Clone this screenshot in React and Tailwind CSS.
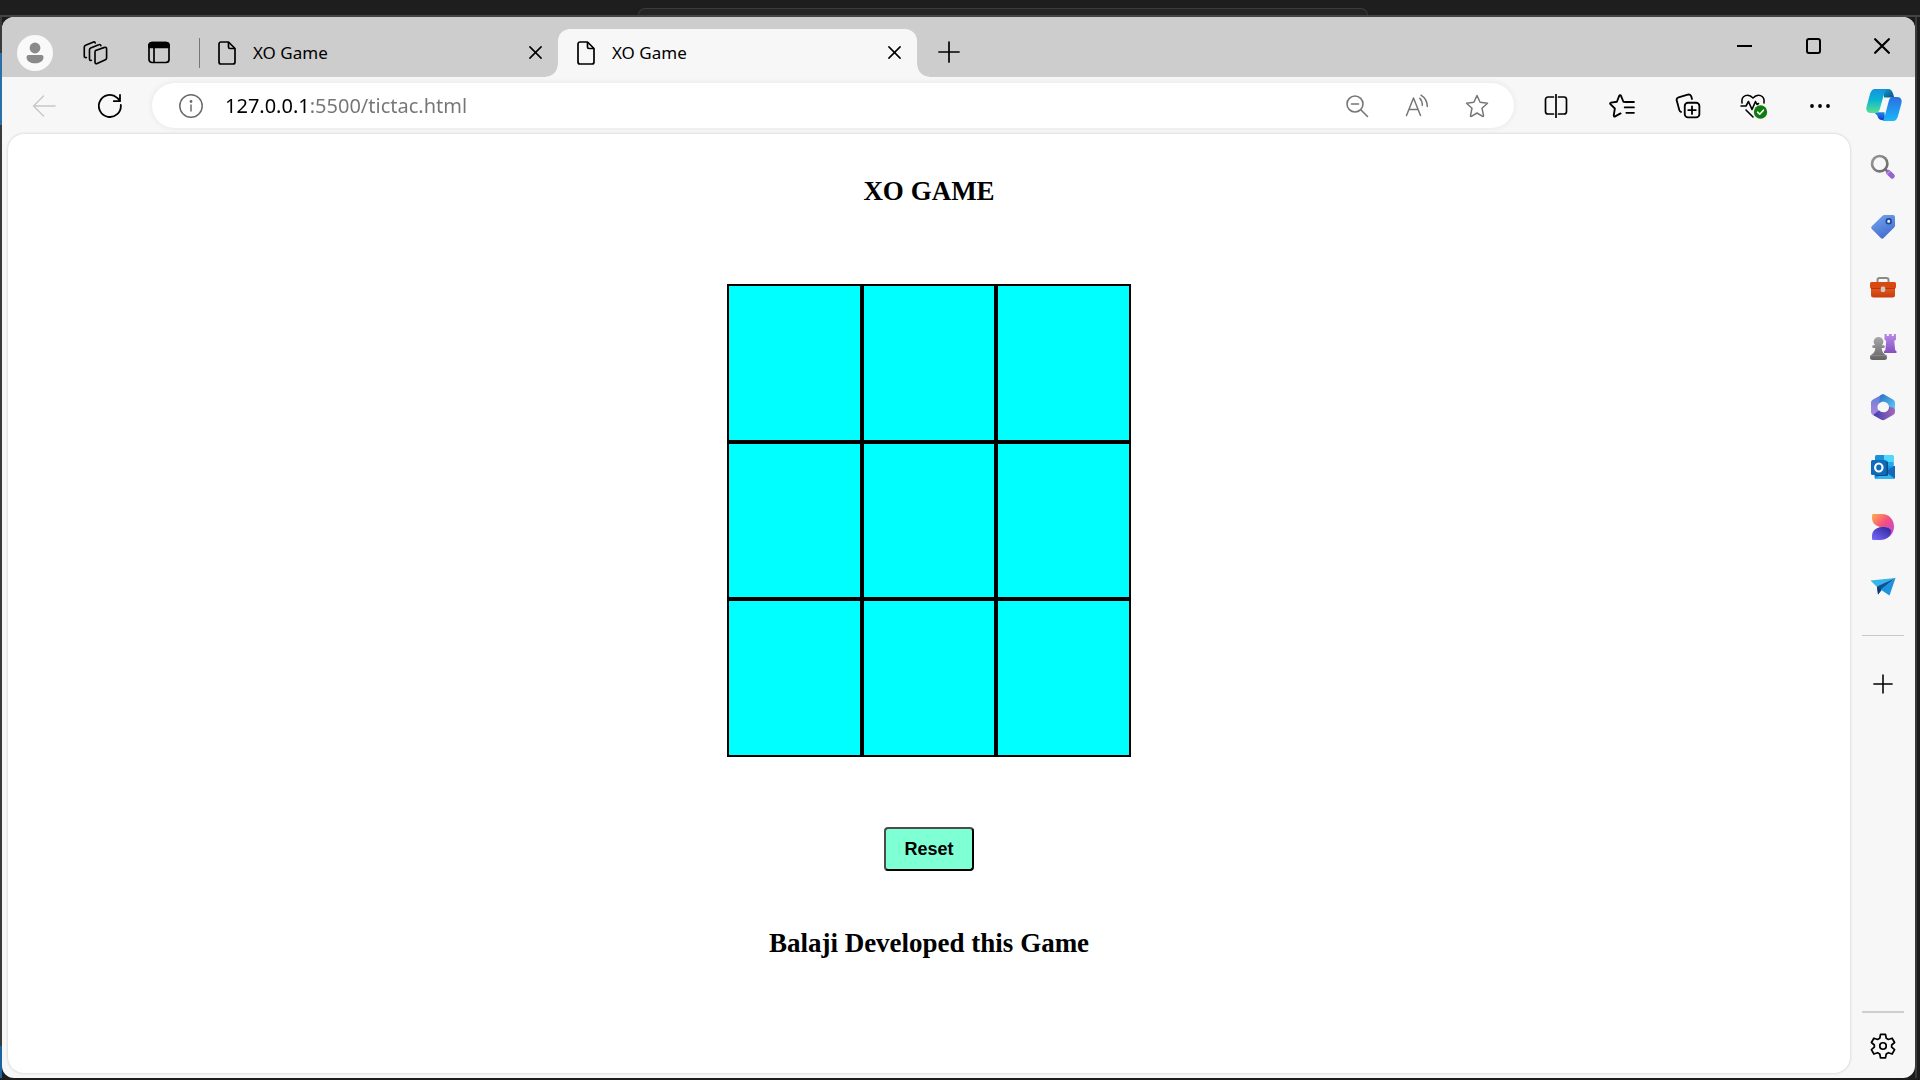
import { useState } from "react";

function Icon({ size = 24, width = 1.7, className = "", children }) {
  return (
    <svg
      width={size}
      height={size}
      viewBox="0 0 24 24"
      fill="none"
      stroke="currentColor"
      strokeWidth={width}
      strokeLinecap="round"
      strokeLinejoin="round"
      className={"shrink-0 " + className}
      aria-hidden="true"
    >
      {children}
    </svg>
  );
}

const ProfileIcon = () => (
  <svg width="36" height="36" viewBox="0 0 36 36" aria-hidden="true">
    <circle cx="18" cy="18" r="18" fill="#f9f9f9" />
    <circle cx="18" cy="13" r="5.4" fill="#8a8a8a" />
    <path d="M11.5 20h13a2 2 0 0 1 2 2c0 4-3.6 6.3-8.500 6.300S9.500 26 9.500 22a2 2 0 0 1 2-2z" fill="#8a8a8a" />
  </svg>
);

const WorkspacesIcon = () => (
  <Icon size={26} width={1.500}>
    <path d="M12.600 9.700l8.200-2.900c1-.4 1.900.2 1.900 1.200v8.600c0 .7-.4 1.300-1.100 1.600l-7.600 3.500c-1 .5-2-.1-2-1.200v-9.300c0-.7.1-1.200.6-1.500z" />
    <path d="M8.600 18.800c-1 .4-1.700-.2-1.700-1.200V8.900c0-.8.4-1.300 1.100-1.600l7.500-3c.9-.4 1.700 0 1.900.9" />
    <path d="M4 16.200c-1 .3-1.900-.2-1.900-1.300V6.600c0-.8.5-1.400 1.200-1.700l6.800-2.900c.9-.4 1.700-.1 2.100.7" />
  </Icon>
);

const TabActionsIcon = () => (
  <Icon>
    <rect x="2" y="1.500" width="20" height="20" rx="3" />
    <path d="M2 6.500V4.500a3 3 0 0 1 3-3h14a3 3 0 0 1 3 3v2z" fill="currentColor" />
    <path d="M7 7v14" />
  </Icon>
);

const PageIcon = () => (
  <svg width="18" height="24" viewBox="0 0 18 24" fill="none" stroke="currentColor" strokeWidth="1.700" strokeLinejoin="round" className="shrink-0" aria-hidden="true">
    <path d="M3 1h7.500L17 7.500V21a2 2 0 0 1-2 2H3a2 2 0 0 1-2-2V3a2 2 0 0 1 2-2z" />
    <path d="M10.500 1v5a1.500 1.500 0 0 0 1.500 1.500h5" />
  </svg>
);

const CloseIcon = ({ size = 13, width = 1.7 }) => (
  <svg width={size} height={size} viewBox="0 0 14 14" fill="none" stroke="currentColor" strokeWidth={width} strokeLinecap="round" aria-hidden="true">
    <path d="M1 1l12 12M13 1L1 13" />
  </svg>
);

const StarIcon = () => (
  <Icon width={1.500}>
    <path d="M12 1.500l3.100 6.800 7.400.9-5.500 5 1.500 7.500c.1.600-.4.900-.9.700L12 19l-5.600 3.400c-.5.200-1-.1-.9-.7L7 14.200l-5.500-5 7.400-.9z" />
  </Icon>
);

const ReadAloudIcon = () => (
  <Icon width={1.500}>
    <path d="M1.500 21.500L8.500 4l7 17.500M4 15.500h9" />
    <path d="M14.800 4.200c1.700 1.800 2.600 4.300 2.500 7" />
    <path d="M16 1.200c4 2.500 6.200 6.600 6.300 11.300" />
  </Icon>
);

const CopilotIcon = () => (
  <svg width="38" height="34" viewBox="0 0 38 34" aria-hidden="true">
    <defs>
      <linearGradient id="cpA" x1="0" y1="0" x2="0" y2="1">
        <stop offset="0" stopColor="#1691e0" />
        <stop offset=".45" stopColor="#08b4d4" />
        <stop offset="1" stopColor="#5be08a" />
      </linearGradient>
      <linearGradient id="cpB" x1="0" y1="0" x2="0" y2="1">
        <stop offset="0" stopColor="#2b6fe0" />
        <stop offset="1" stopColor="#18b8fb" />
      </linearGradient>
      <linearGradient id="cpC" x1="0" y1="0" x2="1" y2="1">
        <stop offset="0" stopColor="#0ba3d8" />
        <stop offset="1" stopColor="#0d4f86" />
      </linearGradient>
      <linearGradient id="cpD" x1="0" y1="0" x2="0" y2="1">
        <stop offset="0" stopColor="#1c8be8" />
        <stop offset="1" stopColor="#1536c8" />
      </linearGradient>
    </defs>
    <path d="M17 1h6c3 0 4.300 2 5.200 5l1 3.500h-10z" fill="url(#cpC)" />
    <path d="M9 24.300h10.500L20 32h-3c-3 0-4-2-4.700-4.500z" fill="url(#cpD)" />
    <path d="M10 1h13c-2.500.5-3.300 2.500-4 5L15 20.500c-.8 3-2.300 4.500-5 4.500H5.500C2 25 .6 22 1.600 18.500L5 6c.9-3 2.300-5 5-5z" fill="url(#cpA)" />
    <path d="M27.500 9h5c3.500 0 4.900 3.200 3.900 6.500L33 28c-.9 3-2.300 5-5 5H16.500c2-.5 2.500-2 3.200-4.500L23.500 14c.8-3 1.500-5 4-5z" fill="url(#cpB)" />
  </svg>
);

const SearchColorIcon = () => (
  <svg width="26" height="26" viewBox="0 0 26 26" fill="none" aria-hidden="true">
    <defs>
      <linearGradient id="seA" x1="0" y1="0" x2="1" y2="1">
        <stop offset="0" stopColor="#9a9a9a" />
        <stop offset="1" stopColor="#666" />
      </linearGradient>
    </defs>
    <path d="M14.500 14.500l3.500 3.500" stroke="#777" strokeWidth="2.500" />
    <circle cx="9.700" cy="9.700" r="7.700" stroke="url(#seA)" strokeWidth="2.600" />
    <path d="M18.500 18.500l3.800 3.600" stroke="#9464cf" strokeWidth="5" strokeLinecap="round" />
    <path d="M17 20l3-3" stroke="#b58be6" strokeWidth="1.500" />
  </svg>
);

const TagIcon = () => (
  <svg width="26" height="26" viewBox="0 0 26 26" aria-hidden="true">
    <defs>
      <linearGradient id="taA" x1="0" y1="0" x2=".5" y2="1">
        <stop offset="0" stopColor="#75a7f2" />
        <stop offset="1" stopColor="#4470cf" />
      </linearGradient>
    </defs>
    <path d="M14.500 1H23a2 2 0 0 1 2 2v8.500c0 .8-.3 1.500-.8 2L13.600 24a2 2 0 0 1-2.800 0L1.800 15a2 2 0 0 1 0-2.800L12.500 1.800c.5-.5 1.200-.8 2-.8z" fill="url(#taA)" />
    <circle cx="18.700" cy="7.300" r="2.400" fill="#f3f6ff" stroke="#24479b" strokeWidth="1.800" />
  </svg>
);

const ToolboxIcon = () => (
  <svg width="28" height="22" viewBox="0 0 28 22" aria-hidden="true">
    <defs>
      <linearGradient id="tbA" x1="0" y1="0" x2="0" y2="1">
        <stop offset="0" stopColor="#e8601b" />
        <stop offset="1" stopColor="#c83b10" />
      </linearGradient>
    </defs>
    <path d="M8.500 6.500V4a2 2 0 0 1 2-2h7a2 2 0 0 1 2 2v2.500" fill="none" stroke="#8a8a8a" strokeWidth="2" />
    <path d="M2 10h24v9a2.500 2.500 0 0 1-2.500 2.500h-19A2.500 2.500 0 0 1 2 19z" fill="url(#tbA)" />
    <path d="M2.500 6h23A1.500 1.500 0 0 1 27 7.500V11a1.500 1.500 0 0 1-1.500 1.500h-23A1.500 1.500 0 0 1 1 11V7.500A1.500 1.500 0 0 1 2.500 6z" fill="#d94a12" />
    <path d="M2 12.500h24" stroke="#b8380c" strokeWidth="1" />
    <rect x="11.800" y="10.500" width="4.400" height="5.500" rx="1.500" fill="#c9c9c9" />
  </svg>
);

const ChessIcon = () => (
  <svg width="28" height="28" viewBox="0 0 28 28" aria-hidden="true">
    <defs>
      <linearGradient id="chA" x1="0" y1="0" x2="0" y2="1">
        <stop offset="0" stopColor="#a8a8a8" />
        <stop offset="1" stopColor="#646464" />
      </linearGradient>
      <linearGradient id="chB" x1="0" y1="0" x2="0" y2="1">
        <stop offset="0" stopColor="#b78be8" />
        <stop offset="1" stopColor="#8450be" />
      </linearGradient>
    </defs>
    <path d="M15.500 1h2.300v2h2V1h3v2h2V1H27v5.500l-1.700 1.500.8 9 1.400 1.300V20H15v-1.700l1.400-1.300.8-9L15.500 6.500z" fill="url(#chB)" />
    <path d="M9.500 4a4.800 4.800 0 0 1 3.300 8.300h1.700c.8 0 1.300.6 1.300 1.300 0 .8-.5 1.400-1.300 1.400h-1.800c.2 3.500 1.500 5.300 3.600 6.600 1.300.9 1.700 2 1.700 3.200 0 1.500-1 2.200-2.500 2.200h-12C2 27 1 26.300 1 24.800c0-1.200.4-2.300 1.700-3.200 2.100-1.300 3.400-3.100 3.600-6.600H4.500c-.8 0-1.300-.6-1.300-1.400 0-.7.5-1.300 1.300-1.300h1.700A4.800 4.800 0 0 1 9.500 4z" fill="url(#chA)" />
    <path d="M1.500 22.500h16" stroke="#888" strokeWidth="1" />
  </svg>
);

const Microsoft365Icon = () => (
  <svg width="26" height="28" viewBox="0 0 26 28" aria-hidden="true">
    <defs>
      <linearGradient id="msA" x1="0" y1="0" x2="0" y2="1">
        <stop offset="0" stopColor="#5f7fd8" />
        <stop offset="1" stopColor="#b187dc" />
      </linearGradient>
      <linearGradient id="msB" x1="0" y1="0" x2="1" y2="1">
        <stop offset="0" stopColor="#2b6fc9" />
        <stop offset="1" stopColor="#5fd0f5" />
      </linearGradient>
      <linearGradient id="msC" x1="0" y1="0" x2="1" y2="0">
        <stop offset="0" stopColor="#3a3fb5" />
        <stop offset="1" stopColor="#a667b8" />
      </linearGradient>
    </defs>
    <path d="M13 1L3 6.500C1.700 7.300 1 8.300 1 9.800v9c0 1.700.9 2.700 2 3.200l6-4c-1-1-1.500-2.300-1.500-4 0-2.500 2-4.500 3.500-5z" fill="url(#msA)" />
    <path d="M10 2.700l1.600-1c1-.6 2-.6 3 0L23 6.500c1.300.8 2 1.800 2 3.300v7.500l-6-3.300c0-3-2.700-5.300-5.700-5.300-1.500 0-3.300.6-4.300 2z" fill="url(#msB)" />
    <path d="M3 22l8.300 4.700c1.200.6 2.300.6 3.400 0L23 22c1.300-.8 2-1.800 2-3.300V17c-.8-2.500-3-3.500-6-3-.2 3.500-2.700 5.300-5.500 5.300-2 0-3.500-.7-4.500-2z" fill="url(#msC)" />
    <circle cx="13.300" cy="14" r="4.700" fill="#f7f7f7" />
  </svg>
);

const OutlookIcon = () => (
  <svg width="26" height="26" viewBox="0 0 26 26" aria-hidden="true">
    <rect x="5" y="1" width="18.500" height="16" rx="1.500" fill="#1a8fdb" />
    <path d="M14 1h8a1.500 1.500 0 0 1 1.500 1.500V8H14z" fill="#4fd9ff" />
    <path d="M14 8h9.500v7H14z" fill="#28a8ea" />
    <path d="M4.500 13L25 12v11a2 2 0 0 1-2 2H6.500a2 2 0 0 1-2-2z" fill="#1490df" />
    <path d="M25 12L13 18.500 24 24.800c.6-.4 1-1 1-1.800z" fill="#1769b8" />
    <path d="M5 24.500l11-6.300 8.500 6.300c-.4.300-.9.500-1.500.500H6.500c-.6 0-1.100-.2-1.500-.5z" fill="#36b4f0" />
    <rect x="5" y="7" width="13" height="15" rx="1.500" fill="#0a4d84" />
    <rect x="1" y="6" width="15.500" height="15" rx="1.500" fill="#0f6cbd" />
    <ellipse cx="8.800" cy="13.500" rx="3.700" ry="4" fill="none" stroke="#fff" strokeWidth="2.200" />
  </svg>
);

const DesignerIcon = () => (
  <svg width="24" height="28" viewBox="0 0 24 28" aria-hidden="true">
    <defs>
      <linearGradient id="deA" x1="0" y1="0" x2="1" y2="1">
        <stop offset="0" stopColor="#ffb04a" />
        <stop offset=".45" stopColor="#f4517d" />
        <stop offset="1" stopColor="#b044f2" />
      </linearGradient>
      <linearGradient id="deB" x1="0" y1="1" x2="1" y2="0">
        <stop offset="0" stopColor="#7a6bff" />
        <stop offset="1" stopColor="#2a2196" />
      </linearGradient>
    </defs>
    <path d="M2.500 1H11c7 0 12 5.500 12 12.500 0 5.500-3 9.500-7 11.500l3-9c-3-2.500-6-2-9-2C5 13.500 1 10 1 5V2.500C1 1.500 1.500 1 2.500 1z" fill="url(#deA)" />
    <path d="M10.500 14c4.500-.5 9.500.5 9.500 4.500 0 5-5.500 8.500-10.500 8.500h-7C1.500 27 1 26.500 1 25.500V23c0-5 4-8.500 9.500-9z" fill="url(#deB)" />
  </svg>
);

const DropIcon = () => (
  <svg width="26" height="20" viewBox="0 0 26 20" aria-hidden="true">
    <path d="M.5 3.500L25.500 1 7.500 10.500z" fill="#36b7ec" />
    <path d="M7 9.500L25.500 1 12.500 12 8 17.500z" fill="#124f93" />
    <path d="M12 12l-4 5.500L7 10z" fill="#0b3c74" />
    <path d="M25.500 1L19.500 18.500 10.500 12.500z" fill="#1e94df" />
  </svg>
);

const tools = [
  {
    label: "Split screen",
    icon: (
      <Icon>
        <path d="M9.500 3H4a2.500 2.500 0 0 0-2.500 2.500v12A2.500 2.500 0 0 0 4 20h5.500M14.500 3H20a2.500 2.500 0 0 1 2.500 2.500v12A2.500 2.500 0 0 1 20 20h-5.500M12 .5v23" />
      </Icon>
    ),
  },
  {
    label: "Favorites",
    icon: (
      <Icon size={26}>
        <path d="M16 8.500l-2.700-.4L11 2.500c-.3-.7-1.200-.7-1.500 0L7.300 8.100l-5.500.8c-.8.100-1 .9-.5 1.400l4.100 4-1 6.400c-.1.800.6 1.300 1.300.9l5-2.800" />
        <path d="M16 8.300h7M14.500 13.300H23M16 18.300h7" />
      </Icon>
    ),
  },
  {
    label: "Collections",
    icon: (
      <Icon size={26}>
        <rect x="9" y="9" width="13.500" height="13.500" rx="3" />
        <path d="M15.700 12.300v7M12.200 15.800h7" />
        <path d="M5.500 17.500c-.8-.3-1.300-.9-1.500-1.700L1.600 7c-.4-1.500.3-2.600 1.700-3l8.500-2.500c1.500-.4 2.700.2 3.200 1.600l.7 2.400" />
      </Icon>
    ),
  },
  {
    label: "Browser essentials",
    icon: (
      <svg width="28" height="28" viewBox="0 0 28 28" fill="none" stroke="currentColor" strokeWidth="1.600" strokeLinecap="round" strokeLinejoin="round" aria-hidden="true">
        <path d="M2 11C.8 3 8.500 1 13 6c4.500-5 12.200-3 11 5M6 18l7 7" />
        <path d="M1 14h5l2.500-4.500 3.500 8L15.500 9.500l1.500 3 1.500-1" />
        <circle cx="20.500" cy="20" r="6.700" fill="#107c10" stroke="none" />
        <path d="M17.600 20.200l2.100 2 3.700-4" stroke="#fff" strokeWidth="1.600" />
      </svg>
    ),
  },
  {
    label: "Settings and more",
    icon: (
      <svg width="22" height="4" viewBox="0 0 22 4" fill="currentColor" aria-hidden="true">
        <circle cx="3" cy="2" r="1.900" />
        <circle cx="11" cy="2" r="1.900" />
        <circle cx="19" cy="2" r="1.900" />
      </svg>
    ),
  },
];

const sidebarApps = [
  ["Search", SearchColorIcon],
  ["Shopping", TagIcon],
  ["Tools", ToolboxIcon],
  ["Games", ChessIcon],
  ["Microsoft 365", Microsoft365Icon],
  ["Outlook", OutlookIcon],
  ["Image Creator", DesignerIcon],
  ["Drop", DropIcon],
];

const PlusIcon = ({ size }) => (
  <svg width={size} height={size} viewBox="0 0 22 22" fill="none" stroke="currentColor" strokeWidth="1.700" strokeLinecap="round" aria-hidden="true">
    <path d="M11 1v20M1 11h20" />
  </svg>
);

function Tab({ active }) {
  return (
    <div
      className={
        "relative flex h-12 w-[359px] items-center pr-2 pb-px pl-[19px] " +
        (active ? "rounded-t-xl bg-[#f7f7f7]" : "")
      }
    >
      {active ? (
        <>
          <span className="absolute bottom-0 -left-3 h-3 w-3 bg-[radial-gradient(circle_at_0_0,transparent_11px,#f7f7f7_12px)]" />
          <span className="absolute -right-3 bottom-0 h-3 w-3 bg-[radial-gradient(circle_at_100%_0,transparent_11px,#f7f7f7_12px)]" />
        </>
      ) : (
        <span className="absolute left-0 h-[30px] w-px bg-[#777]" />
      )}
      <button className="flex flex-1 items-center gap-[17px] text-left">
        <PageIcon />
        <span>XO Game</span>
      </button>
      <button aria-label="Close tab" className="flex h-[30px] w-[30px] items-center justify-center">
        <CloseIcon />
      </button>
    </div>
  );
}

function TitleBar() {
  return (
    <header className="flex h-[60px] items-end bg-[#cdcdcd]">
      <div className="flex h-12 items-center">
        <button aria-label="Profile" className="flex w-[66px] justify-center">
          <ProfileIcon />
        </button>
        <button aria-label="Workspaces" className="flex w-[54px] justify-center">
          <WorkspacesIcon />
        </button>
        <button aria-label="Tab actions" className="mr-1 flex w-[73px] justify-center">
          <TabActionsIcon />
        </button>
      </div>
      <Tab />
      <Tab active />
      <button aria-label="New tab" className="flex h-12 w-16 items-center justify-center pb-0.5">
        <PlusIcon size={22} />
      </button>
      <div className="ml-auto flex self-start">
        <button aria-label="Minimize" className="flex h-[58px] w-[69px] items-center justify-center">
          <span className="h-0.5 w-[15px] bg-black" />
        </button>
        <button aria-label="Maximize" className="flex h-[58px] w-[69px] items-center justify-center">
          <span className="h-4 w-[15px] rounded-[3px] border-2 border-black" />
        </button>
        <button aria-label="Close window" className="flex h-[58px] w-[67px] items-center justify-center">
          <CloseIcon size={16} width={1.900} />
        </button>
      </div>
    </header>
  );
}

function Toolbar() {
  const [url, setUrl] = useState("127.0.0.1:5500/tictac.html");
  return (
    <nav className="flex h-[57px] items-center pl-[9px]">
      <button aria-label="Back" className="flex w-[66px] justify-center text-[#c8c8c8]">
        <Icon width={1.500}>
          <path d="M23 12H1.500M11.500 2L1.500 12l10 10" />
        </Icon>
      </button>
      <button aria-label="Refresh" className="flex w-[66px] justify-center">
        <Icon width={1.800}>
          <path d="M22.800 11a11 11 0 1 1-3.600-7.200l2.500 2.600M22 1v6.200h-6.200" />
        </Icon>
      </button>
      <div className="mx-[9px] flex h-[45px] flex-1 items-center rounded-full bg-white pr-[7px] pl-[27px] shadow-[0_0_6px_rgba(0,0,0,0.08)]">
        <button aria-label="Site information" className="text-[#6b6b6b]">
          <Icon width={1.500}>
            <circle cx="12" cy="12" r="11.200" />
            <path d="M12 11v6" width="2" />
            <circle cx="12" cy="7.500" r=".7" fill="currentColor" />
          </Icon>
        </button>
        <input
          aria-label="Address"
          value={url}
          onChange={(e) => setUrl(e.target.value)}
          className="ml-[22px] min-w-0 flex-1 bg-[linear-gradient(90deg,#000_84px,#757575_84px)] bg-clip-text text-xl text-transparent outline-none"
        />
        <button aria-label="Zoom" className="flex w-[60px] justify-center text-[#767676]">
          <Icon width={1.600}>
            <circle cx="10" cy="10" r="8" />
            <path d="M16 16l6.500 6.500M6.500 10h7" />
          </Icon>
        </button>
        <button aria-label="Read aloud" className="flex w-[60px] justify-center text-[#767676]">
          <ReadAloudIcon />
        </button>
        <button aria-label="Add to favorites" className="flex w-[60px] justify-center text-[#767676]">
          <StarIcon />
        </button>
      </div>
      {tools.map((t) => (
        <button key={t.label} aria-label={t.label} className="flex w-[66px] justify-center">
          {t.icon}
        </button>
      ))}
      <button aria-label="Copilot" className="flex w-[62px] justify-center pb-px">
        <CopilotIcon />
      </button>
    </nav>
  );
}

function Game() {
  const [cells, setCells] = useState(Array(9).fill(""));
  const play = (i) =>
    setCells((c) => (c[i] ? c : c.map((v, j) => (j === i ? (c.filter(Boolean).length % 2 ? "O" : "X") : v))));
  return (
    <main className="mb-[5px] ml-1.5 flex flex-1 flex-col items-center rounded-2xl bg-white pt-[41px] shadow-[0_0_3px_rgba(0,0,0,0.2)]">
      <h1 className="font-['Liberation_Serif',serif] text-[27px] leading-8 font-bold">XO GAME</h1>
      <div className="mt-[77px] grid h-[473px] w-[404px] grid-cols-3 grid-rows-3">
        {cells.map((v, i) => (
          <button
            key={i}
            aria-label={"Cell " + (i + 1)}
            onClick={() => play(i)}
            className="border-2 border-black bg-[#00ffff] font-['Liberation_Sans',sans-serif] text-6xl"
          >
            {v}
          </button>
        ))}
      </div>
      <button
        onClick={() => setCells(Array(9).fill(""))}
        className="mt-[70px] h-11 w-[90px] rounded-[4px] border-2 border-t-[#4c4c4c] border-r-black border-b-black border-l-[#4c4c4c] bg-[#7fffd4] font-['Liberation_Sans',sans-serif] text-lg font-bold"
      >
        Reset
      </button>
      <h2 className="mt-14 font-['Liberation_Serif',serif] text-[27px] leading-8 font-bold">
        Balaji Developed this Game
      </h2>
    </main>
  );
}

function Sidebar() {
  return (
    <aside className="flex w-[65px] flex-col items-center pt-[3px]">
      {sidebarApps.map(([label, Glyph]) => (
        <button key={label} aria-label={label} className="flex h-[60px] w-full items-center justify-center">
          <Glyph />
        </button>
      ))}
      <hr className="mt-[18px] w-[42px] border-[#c8c8c8]" />
      <button aria-label="Customize" className="mt-[18px] flex h-[60px] w-full items-center justify-center">
        <PlusIcon size={20} />
      </button>
      <hr className="mt-auto w-[42px] border-t-2 border-[#cfcfcf]" />
      <button aria-label="Settings" className="flex h-[65px] w-full items-center justify-center">
        <Icon size={26} width={1.600}>
          <path d="M9.700 1.300h4.600l.7 3.600 2 1.100 3.400-1.200 2.300 4-2.700 2.300v2.000l2.700 2.300-2.300 4-3.400-1.200-2 1.100-.7 3.600H9.700L9 19.300l-2-1.100-3.400 1.200-2.300-4L4 13.100v-2.000L1.300 8.800l2.300-4L7 6l2-1.100z" />
          <circle cx="12" cy="12" r="3" />
        </Icon>
      </button>
    </aside>
  );
}

export default function App() {
  return (
    <div className="flex min-h-screen flex-col overflow-hidden bg-[#1e1e1e] font-['Noto_Sans','Open_Sans',sans-serif] text-[17px] text-black">
      <div className="flex h-[17px] items-end justify-center border-b-2 border-[#444]">
        <div className="mr-[-86px] h-[7px] w-[730px] rounded-t-lg border border-b-0 border-[#3c3c3c] bg-[#242424]" />
      </div>
      <div className="flex flex-1 bg-[#1c1c1c] pb-0.5">
        <div className="flex w-0.5 flex-col bg-[#3a3a3a]">
          <span className="mt-9 h-[72px] bg-[#2a6fa8]" />
          <span className="mt-auto h-8 bg-[#1c64a0]" />
        </div>
        <div className="flex min-w-0 flex-1 flex-col overflow-hidden rounded-xl bg-[#f7f7f7]">
          <TitleBar />
          <Toolbar />
          <div className="flex flex-1">
            <Game />
            <Sidebar />
          </div>
        </div>
        <div className="w-[5px] border-l-2 border-[#3a3a3a]" />
      </div>
    </div>
  );
}
